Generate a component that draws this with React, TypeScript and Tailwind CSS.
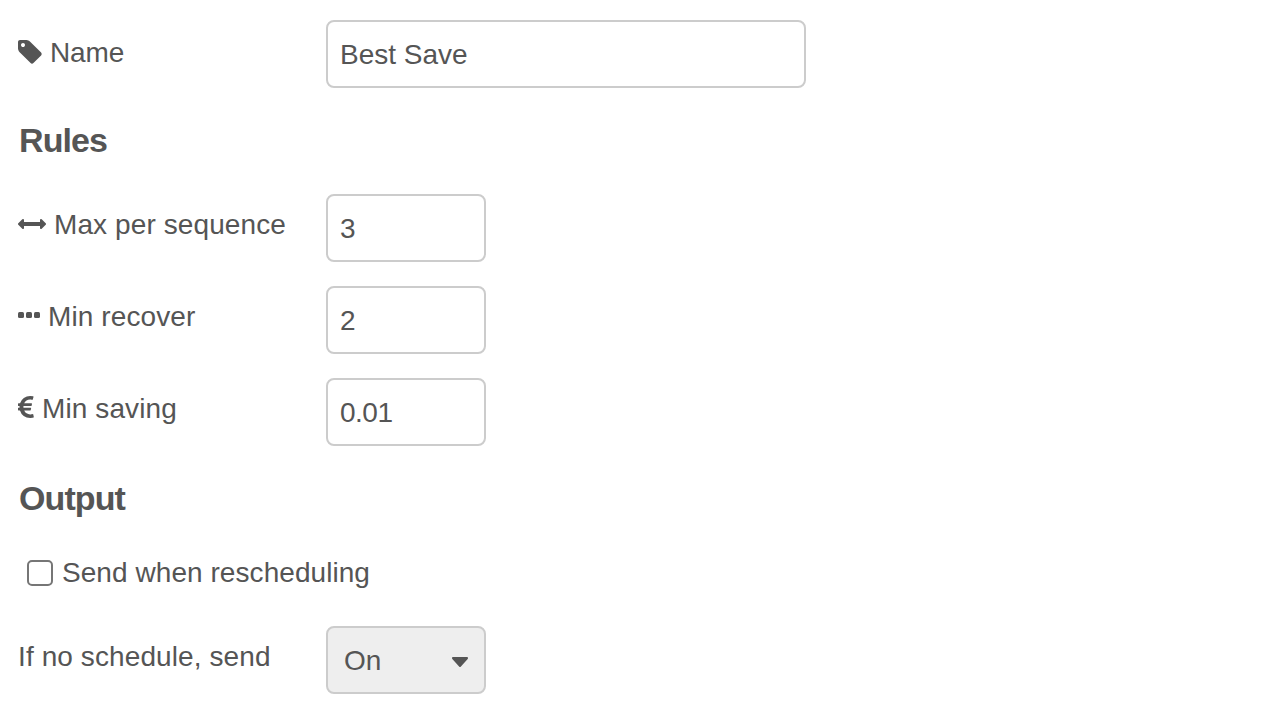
import React, { useState } from 'react';

const labelStyle = 'flex h-[60px] w-[308px] shrink-0 items-center gap-2 whitespace-nowrap tracking-[0.1px]';
const boxStyle = 'h-[68px] rounded-lg border-2 border-[#ccc] bg-white px-3 pt-0.5 text-[28px] text-[#555] outline-none';
const headingStyle = 'h-10 pl-px text-[34px] font-bold leading-[38px] tracking-[-0.9px]';

function TagIcon() {
  return (
    <svg className="h-6 w-6 shrink-0" viewBox="128 128 1536 1536" fill="currentColor">
      <path d="M576 448q0-53-37.5-90.5t-90.5-37.5-90.5 37.5-37.5 90.5 37.5 90.5 90.5 37.5 90.5-37.5 37.5-90.5zm1067 576q0 53-37 90l-491 492q-39 37-91 37-53 0-90-37l-715-716q-38-37-64.5-101t-26.5-117v-416q0-52 38-90t90-38h416q53 0 117 26.5t102 64.5l715 714q37 39 37 91z" />
    </svg>
  );
}

function ArrowsIcon() {
  return (
    <svg className="h-7 w-7 shrink-0" viewBox="0 0 1792 1792" fill="currentColor">
      <path d="M1792 896q0 26-19 45l-256 256q-19 19-45 19t-45-19-19-45v-128h-1024v128q0 26-19 45t-45 19-45-19l-256-256q-19-19-19-45t19-45l256-256q19-19 45-19t45 19 19 45v128h1024v-128q0-26 19-45t45-19 45 19l256 256q19 19 19 45z" />
    </svg>
  );
}

function DotsIcon() {
  return (
    <svg className="mb-0.5 h-1.5 w-[22px] shrink-0" viewBox="0 0 22 6" fill="currentColor">
      <rect width="6" height="6" rx="1.5" />
      <rect x="8" width="6" height="6" rx="1.5" />
      <rect x="16" width="6" height="6" rx="1.5" />
    </svg>
  );
}

function EuroIcon() {
  return (
    <svg className="h-7 w-4 shrink-0" viewBox="384 0 1024 1792" fill="currentColor">
      <path d="M1360 1307l35 159q3 12-3 22.5t-17 14.5l-5 1q-4 2-10.5 3.5t-16 4.5-21.5 5.5-25.5 5-30 5-33.5 4.5-36.5 3-38.5 1q-234 0-409-130.5t-238-351.5h-95q-13 0-22.5-9.5t-9.5-22.5v-113q0-13 9.5-22.5t22.5-9.5h66q-2-57 1-105h-67q-14 0-23-9t-9-23v-114q0-14 9-23t23-9h98q67-210 243.5-338t400.5-128q102 0 194 23 11 3 20 15 6 11 3 24l-43 159q-3 13-14 19.5t-24 2.5l-4-1q-4-1-11.5-2.5l-17.5-3.5-22.5-3.5-26-3-29-2.5-29.5-1q-126 0-226 64t-150 176h468q16 0 25 12 10 12 7 26l-24 114q-5 26-32 26h-488q-3 37 0 105h459q15 0 25 12 9 12 6 27l-24 112q-2 11-11 18.5t-20 7.5h-387q48 117 149.5 185.5t228.5 68.5q18 0 36-1.5t33.5-3.5 29.5-4.5 24.5-5 18.5-4.5l12-3 5-2q13-5 26 2 12 7 15 21z" />
    </svg>
  );
}

export default function App() {
  const [on, setOn] = useState(true);
  return (
    <main className="h-[708px] w-full overflow-hidden bg-white pt-5 pl-[18px] font-['Liberation_Sans',Arial,sans-serif] text-[28px] leading-10 text-[#555] antialiased">
      <div className="flex h-[68px]">
        <label htmlFor="name" className={`${labelStyle} mt-0.5`}><TagIcon /><span className="pt-0.5 tracking-[-0.1px]">Name</span></label>
        <input id="name" className={`${boxStyle} w-[480px]`} defaultValue="Best Save" />
      </div>
      <h2 className={`${headingStyle} mt-[33px]`}>Rules</h2>
      <div className="mt-[33px] flex flex-col gap-6">
        <div className="flex">
          <label htmlFor="max" className={labelStyle}><ArrowsIcon /><span className="pt-0.5">Max per sequence</span></label>
          <input id="max" className={`${boxStyle} w-40`} defaultValue="3" />
        </div>
        <div className="flex">
          <label htmlFor="recover" className={labelStyle}><DotsIcon /><span className="pt-0.5">Min recover</span></label>
          <input id="recover" className={`${boxStyle} w-40`} defaultValue="2" />
        </div>
        <div className="flex">
          <label htmlFor="saving" className={labelStyle}><EuroIcon /><span className="pt-0.5">Min saving</span></label>
          <input id="saving" className={`${boxStyle} w-40 tracking-[-0.5px]`} defaultValue="0.01" />
        </div>
      </div>
      <h2 className={`${headingStyle} mt-[33px]`}>Output</h2>
      <label className="mt-[34px] ml-[9px] flex h-10 items-center whitespace-nowrap">
        <input type="checkbox" className="mr-[9px] size-[26px] shrink-0 appearance-none rounded-[5px] border-2 border-[#767676] bg-white checked:bg-[#767676]" />
        <span className="tracking-[0.06px]">Send when rescheduling</span>
      </label>
      <div className="mt-[33px] flex">
        <span className={labelStyle}><span className="pt-0.5">If no schedule, send</span></span>
        <button
          type="button"
          onClick={() => setOn(!on)}
          className="flex h-[68px] w-40 items-center justify-between rounded-lg border-2 border-[#ccc] bg-[#eee] pt-0.5 pr-4 pl-4"
        >
          <span>{on ? 'On' : 'Off'}</span>
          <svg className="mt-px h-2.5 w-4" viewBox="0 0 16 9" preserveAspectRatio="none" fill="currentColor">
            <path d="M1 0h14q.4 0 .7.3t.3.7-.3.7l-7 7Q8.4 9 8 9t-.7-.3l-7-7Q0 1.4 0 1t.3-.7T1 0z" />
          </svg>
        </button>
      </div>
    </main>
  );
}
